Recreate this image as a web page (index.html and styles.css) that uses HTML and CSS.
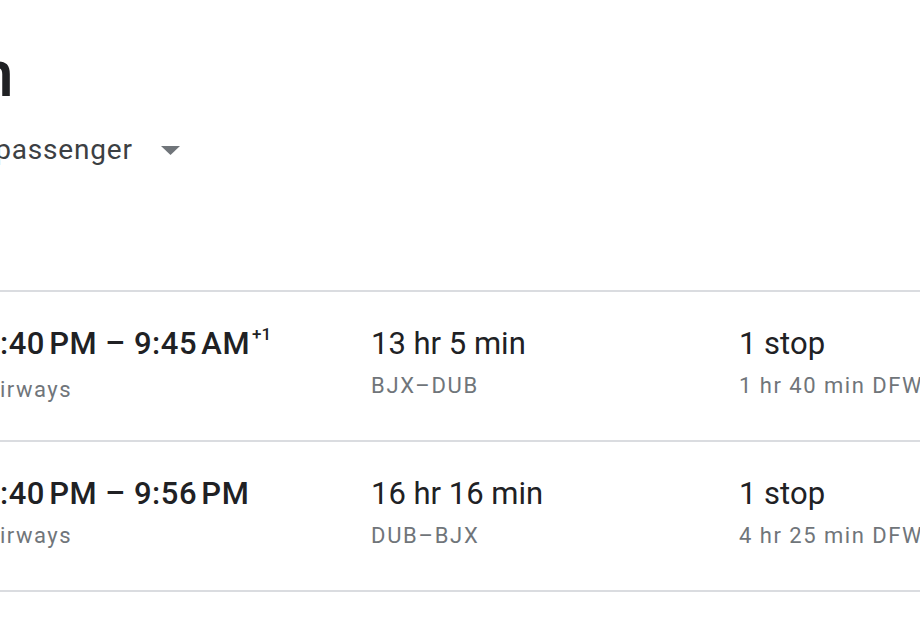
FILE: index.html
```html
<!DOCTYPE html>
<html lang="en">
<head>
<meta charset="utf-8">
<title>Flights to Dublin</title>
<link rel="stylesheet" href="styles.css">
</head>
<body>
<main class="page">
  <header class="search-head">
    <h1 class="title">Dublin</h1>
    <div class="passengers">
      <span class="passengers-label">1 passenger</span>
      <svg class="caret" width="19" height="9" viewBox="0 0 19 9" aria-hidden="true"><path d="M0 0h19L9.5 9z" fill="#70757a"/></svg>
    </div>
  </header>

  <ul class="results">
    <li class="flight">
      <div class="col col-times">
        <div class="main times">:40&#8239;PM – 9:45&#8239;AM<sup class="plus">+1</sup></div>
        <div class="sub">irways</div>
      </div>
      <div class="col col-duration">
        <div class="main">13 hr 5 min</div>
        <div class="sub route">BJX–DUB</div>
      </div>
      <div class="col col-stops">
        <div class="main">1 stop</div>
        <div class="sub">1 hr 40 min DFW</div>
      </div>
    </li>
    <li class="flight">
      <div class="col col-times">
        <div class="main times">:40&#8239;PM – 9:56&#8239;PM</div>
        <div class="sub">irways</div>
      </div>
      <div class="col col-duration">
        <div class="main">16 hr 16 min</div>
        <div class="sub route">DUB–BJX</div>
      </div>
      <div class="col col-stops">
        <div class="main">1 stop</div>
        <div class="sub">4 hr 25 min DFW</div>
      </div>
    </li>
  </ul>
</main>
</body>
</html>
```

FILE: styles.css
```css
html, body {
  margin: 0;
  padding: 0;
  background: #ffffff;
}

body {
  width: 920px;
  height: 636px;
  overflow: hidden;
  font-family: Roboto, "Liberation Sans", Arial, sans-serif;
  color: #202124;
}

.page {
  display: flex;
  flex-direction: column;
}

.search-head {
  display: flex;
  flex-direction: column;
  padding-top: 37px;
  height: 290px;
  box-sizing: border-box;
}

.title {
  margin: 0 0 0 -168px;
  font-size: 64px;
  line-height: 76px;
  font-weight: 500;
  white-space: nowrap;
  color: #202124;
}

.passengers {
  display: flex;
  align-items: center;
  gap: 28px;
  margin-top: 19px;
  margin-left: -29px;
}

.passengers-label {
  font-size: 28px;
  line-height: 36px;
  letter-spacing: 0.8px;
  color: #3c4043;
  white-space: nowrap;
}

.caret {
  display: block;
  margin-top: 1px;
}

.results {
  list-style: none;
  margin: 0;
  padding: 0;
  border-bottom: 2px solid #dadce0;
}

.flight {
  display: grid;
  grid-template-columns: 371px 368px 1fr;
  height: 150px;
  box-sizing: border-box;
  border-top: 2px solid #dadce0;
  padding-top: 32px;
}

.col {
  display: flex;
  flex-direction: column;
  white-space: nowrap;
}

.main {
  font-size: 31px;
  line-height: 40px;
  font-weight: 400;
  color: #202124;
}

.times {
  font-weight: 500;
  letter-spacing: 0.5px;
}

.plus {
  font-size: 17px;
  font-weight: 500;
  letter-spacing: 0;
  vertical-align: 0;
  position: relative;
  top: -14px;
  margin-left: 2px;
}

.sub {
  margin-top: 8px;
  font-size: 22px;
  line-height: 28px;
  letter-spacing: 1.5px;
  color: #70757a;
}

.route {
  letter-spacing: 1.7px;
}
```
